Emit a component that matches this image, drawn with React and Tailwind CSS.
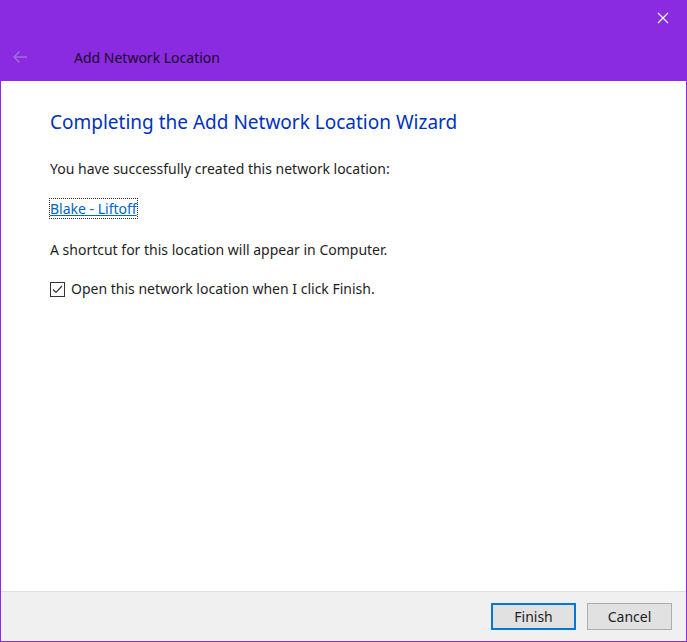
import React, { useState } from "react";

const font = { fontFamily: '"Segoe UI", "Noto Sans", "Open Sans", sans-serif' };

function BackArrow() {
  return (
    <svg width="16" height="14" viewBox="0 0 16 14" fill="none">
      <path d="M15 7H2M7.5 1.5L2 7l5.5 5.5" stroke="#a070d0" strokeWidth="1.4" />
    </svg>
  );
}

function CloseIcon() {
  return (
    <svg width="12" height="12" viewBox="0 0 12 12" fill="none">
      <path d="M1 1l10 10M11 1L1 11" stroke="#ffffff" strokeWidth="1.2" />
    </svg>
  );
}

export default function App() {
  const [checked, setChecked] = useState(true);

  return (
    <div
      className="w-[687px] h-[642px] flex flex-col bg-white border-x border-b border-[#8a2be2] text-[#1e1e1e] overflow-hidden"
      style={font}
    >
      {/* Title bar */}
      <div className="h-[81px] shrink-0 bg-[#8a2be2] flex flex-col">
        <div className="flex justify-end pt-[12px] pr-[17px]">
          <CloseIcon />
        </div>
        <div className="flex items-center h-[24px] mt-[21px]">
          <div className="w-[73px] pl-[11px]">
            <BackArrow />
          </div>
          <p className="text-[14px] text-[#1b0a2a]">Add Network Location</p>
        </div>
      </div>

      {/* Body */}
      <div className="flex-1 flex flex-col pl-[49px] pt-[27px]">
        <h1 className="text-[19px] leading-[28px] text-[#0033bc]">
          Completing the Add Network Location Wizard
        </h1>
        <p className="text-[14px] leading-[20px] mt-[23px]">
          You have successfully created this network location:
        </p>
        <div className="mt-[17px]">
          <a className="text-[14px] leading-[18px] text-[#0066cc] underline outline-1 outline-dotted outline-[#333] cursor-pointer">
            Blake - Liftoff
          </a>
        </div>
        <p className="text-[14px] leading-[20px] mt-[20px]">
          A shortcut for this location will appear in Computer.
        </p>
        <label className="flex items-center gap-[6px] mt-[19px] cursor-pointer">
          <span
            onClick={() => setChecked(!checked)}
            className="w-[15px] h-[15px] border border-[#333] bg-white flex items-center justify-center"
          >
            {checked && (
              <svg width="11" height="9" viewBox="0 0 11 9" fill="none">
                <path d="M1 4.5l3 3L10 1" stroke="#333" strokeWidth="1.2" />
              </svg>
            )}
          </span>
          <span className="text-[14px] leading-[20px]">
            Open this network location when I click Finish.
          </span>
        </label>
      </div>

      {/* Footer */}
      <div className="h-[50px] shrink-0 bg-[#f0f0f0] border-t border-[#dfdfdf] flex justify-end items-start pt-[11px] pr-[14px] gap-[11px]">
        <button className="w-[85px] h-[27px] bg-[#e1e1e1] border-2 border-[#0078d7] text-[14px] text-[#1e1e1e]">
          Finish
        </button>
        <button className="w-[85px] h-[27px] bg-[#e1e1e1] border border-[#adadad] text-[14px] text-[#1e1e1e]">
          Cancel
        </button>
      </div>
    </div>
  );
}
